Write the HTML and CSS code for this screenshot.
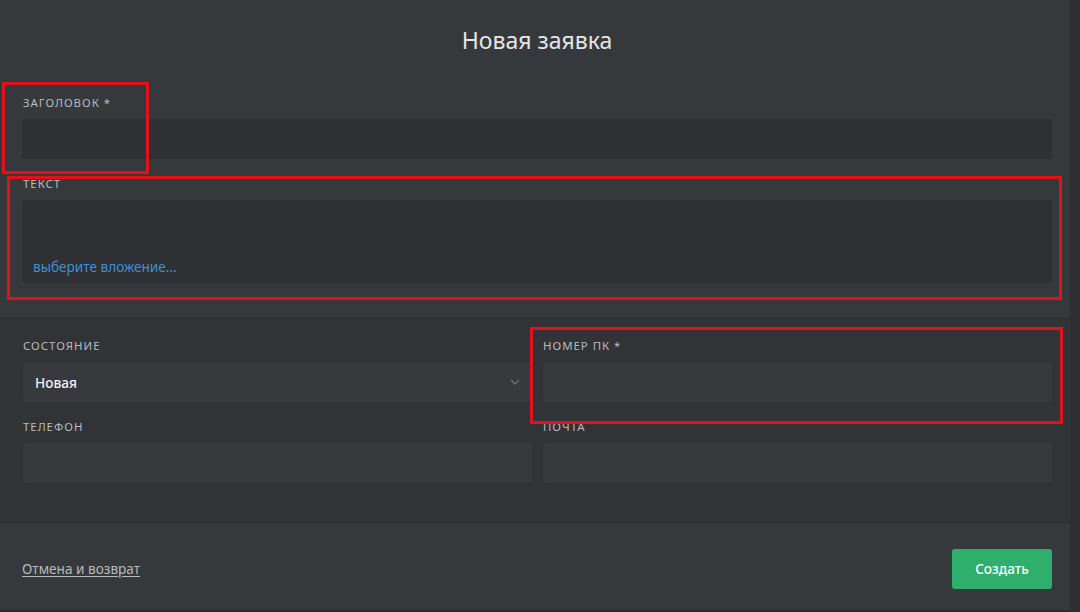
FILE: index.html
```html
<!doctype html>
<html lang="ru">
  <head>
    <meta charset="utf-8">
    <title>Новая заявка</title>
    <link rel="stylesheet" href="styles.css">
  </head>
  <body>
    <div class="modal">
      <div class="section top">
        <h1 class="title">Новая заявка</h1>

        <div class="field">
          <label class="label">Заголовок *</label>
          <input class="input dark" type="text">
        </div>

        <div class="field">
          <label class="label">Текст</label>
          <div class="textarea">
            <a class="attach" href="#">выберите вложение...</a>
          </div>
        </div>
      </div>

      <div class="section middle">
        <div class="grid">
          <div class="field">
            <label class="label">Состояние</label>
            <div class="select">
              <span>Новая</span>
              <svg class="chevron" width="10" height="6" viewBox="0 0 10 6">
                <polyline points="1,1 5,5 9,1" fill="none" stroke="#6c6f73" stroke-width="1.4"/>
              </svg>
            </div>
          </div>
          <div class="field">
            <label class="label">Номер ПК *</label>
            <input class="input" type="text">
          </div>
          <div class="field">
            <label class="label">Телефон</label>
            <input class="input" type="text">
          </div>
          <div class="field">
            <label class="label">Почта</label>
            <input class="input" type="text">
          </div>
        </div>
      </div>

      <div class="section footer">
        <a class="cancel" href="#">Отмена и возврат</a>
        <button class="submit">Создать</button>
      </div>
    </div>

    <!-- annotation boxes -->
    <div class="mark mark-title"></div>
    <div class="mark mark-text"></div>
    <div class="mark mark-pc"></div>
  </body>
</html>
```

FILE: styles.css
```css
* {
  box-sizing: border-box;
}

body {
  margin: 0;
  position: relative;
  background: #2d2f32;
  font-family: "Noto Sans", "Open Sans", sans-serif;
  color: #dcdddf;
  height: 612px;
  overflow: hidden;
}

.modal {
  width: 1070px;
  background: #36393c;
  border-bottom: 2px solid #2a2c2f;
}

.section {
  padding: 0 18px 0 22px;
}

.top {
  padding-top: 26px;
  padding-bottom: 35px;
}

.title {
  margin: 0 0 41px;
  text-align: center;
  font-size: 23px;
  font-weight: 400;
  line-height: 28px;
  color: #e4e5e7;
}

.field {
  display: flex;
  flex-direction: column;
}

.field + .field {
  margin-top: 17px;
}

.label {
  font-size: 11.4px;
  line-height: 16px;
  letter-spacing: 1px;
  text-transform: uppercase;
  color: #b9bbbe;
  padding-left: 1px;
  margin-bottom: 8px;
}

.input {
  height: 40px;
  width: 100%;
  border: none;
  border-radius: 3px;
  background: #37393c;
  box-shadow: inset 1px 0 0 #2b2d30;
  outline: none;
}

.input.dark {
  background: #2e3033;
  box-shadow: none;
}

.textarea {
  height: 83px;
  border-radius: 3px;
  background: #2e3033;
  display: flex;
  align-items: flex-end;
  padding: 0 11px 8px;
}

.attach {
  font-size: 13.6px;
  line-height: 16px;
  color: #3f8fd6;
  text-decoration: none;
}

.middle {
  background: #313336;
  border-top: 1px solid #2a2c2f;
  border-bottom: 1px solid #2a2c2f;
  padding-top: 19px;
  padding-bottom: 39px;
}

.grid {
  display: grid;
  grid-template-columns: 1fr 1fr;
  column-gap: 10px;
}

.grid .field + .field {
  margin-top: 0;
}

.grid .field:nth-child(n+3) {
  margin-top: 17px;
}

.select {
  height: 40px;
  border-radius: 3px;
  background: #37393c;
  box-shadow: inset 1px 0 0 #2b2d30;
  display: flex;
  align-items: center;
  justify-content: space-between;
  padding: 0 12px 0 13px;
  font-size: 13.6px;
  font-weight: 500;
  color: #f0f1f2;
}

.footer {
  height: 87px;
  padding-top: 4px;
  display: flex;
  align-items: center;
  justify-content: space-between;
}

.cancel {
  font-size: 13.6px;
  color: #b5b8bc;
  text-decoration: underline;
  text-underline-offset: 2px;
}

.submit {
  width: 100px;
  height: 40px;
  border: none;
  border-radius: 3px;
  background: #2eaf6b;
  color: #fff;
  font-family: inherit;
  font-size: 13.6px;
  font-weight: 500;
}

.mark {
  position: absolute;
  border: 3px solid #e3121a;
}

.mark-title {
  left: 2px;
  top: 82px;
  width: 147px;
  height: 92px;
}

.mark-text {
  left: 7px;
  top: 176px;
  width: 1055px;
  height: 124px;
}

.mark-pc {
  left: 530px;
  top: 327px;
  width: 533px;
  height: 97px;
}
```
